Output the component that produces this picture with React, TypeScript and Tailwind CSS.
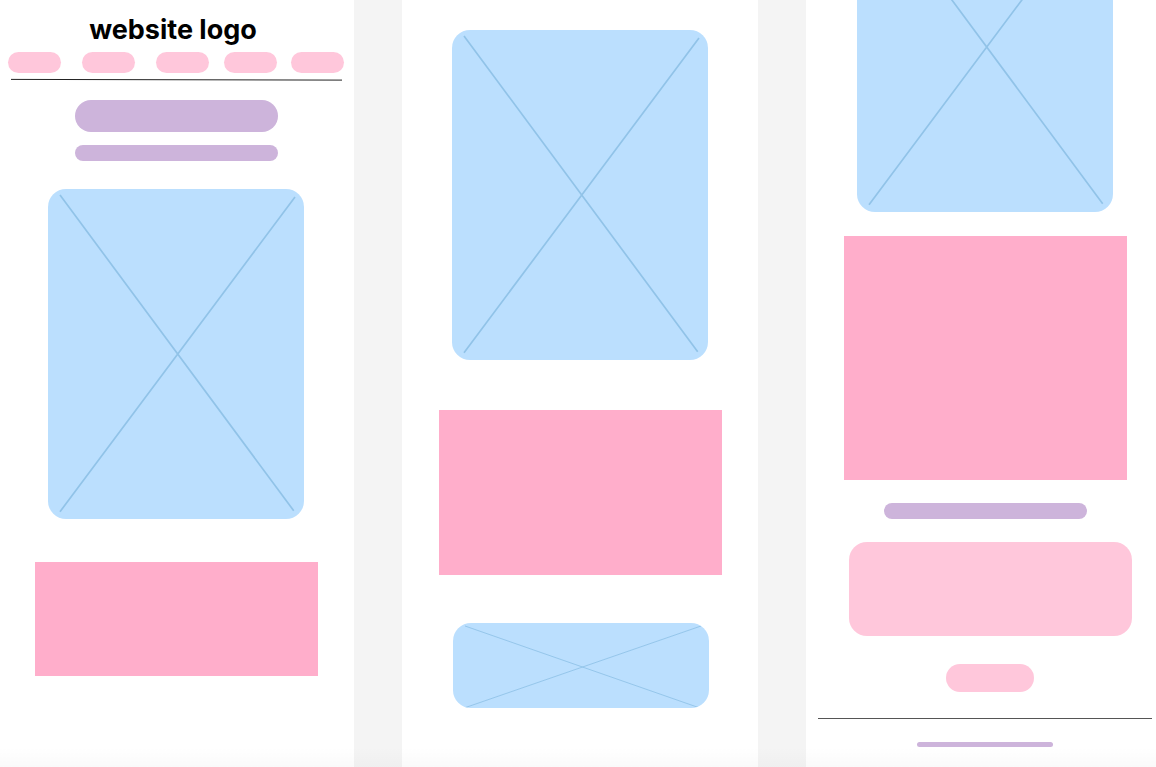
import type { ReactNode } from "react";

const navGroups = [
  ["Home", "Shop", "About"],
  ["Blog", "Contact"],
];

function Panel({ className, children }: { className: string; children: ReactNode }) {
  return (
    <section className={`flex min-w-0 flex-col items-center overflow-hidden bg-white ${className}`}>
      {children}
    </section>
  );
}

function TallImage() {
  return (
    <div className="h-[330px] w-64 shrink-0 rounded-[18px] bg-[#bbdffe]">
      <svg viewBox="0 0 256 330" className="block size-full" stroke="#91c3e8" strokeWidth="1.7" aria-hidden="true">
        <path d="M12 6 245.7 321.7M247 8 12 322.7" />
      </svg>
    </div>
  );
}

function WideImage() {
  return (
    <div className="h-[85px] w-64 shrink-0 overflow-hidden rounded-[18px] bg-[#bbdffe]">
      <svg viewBox="0 0 256 85" className="block size-full" stroke="#91c3e8" strokeWidth="0.9" aria-hidden="true">
        <path d="M12 3 246 84.7M248 3 12 84.7" />
      </svg>
    </div>
  );
}

function Header() {
  return (
    <header className="w-full pr-2.5 pl-2">
      <h1 className="pt-3 pr-1.5 text-center text-[27px] leading-9 font-bold text-black">website logo</h1>
      <nav className="mt-1 flex justify-between">
        {navGroups.map((group, i) => (
          <div key={i} className={i === 0 ? "flex gap-[21px]" : "flex gap-3.5"}>
            {group.map((name) => (
              <a key={name} href="#" aria-label={name} className="h-[21px] w-[53px] rounded-full bg-[#ffc7db]" />
            ))}
          </div>
        ))}
      </nav>
      <svg viewBox="0 0 336 4" className="mt-1 block h-1 w-full" aria-hidden="true">
        <path d="M3 2.4 334 3.1" stroke="#222" strokeWidth="1" />
      </svg>
    </header>
  );
}

export default function App() {
  return (
    <main className="relative grid min-h-screen grid-cols-[354fr_356fr_350fr] gap-12 bg-[#f4f4f4] font-['Inter',sans-serif]">
      <Panel className="pb-10">
        <Header />
        <div className="flex w-full flex-col items-center pt-[19px] pr-0.5">
          <div className="h-8 w-[203px] rounded-full bg-[#cdb4db]" />
          <div className="mt-[13px] h-4 w-[203px] rounded-full bg-[#cdb4db]" />
          <div className="mt-7 flex">
            <TallImage />
          </div>
          <div className="mt-[43px] h-[114px] w-[283px] bg-[#ffaecb]" />
        </div>
      </Panel>

      <Panel className="pt-[30px] pb-10">
        <TallImage />
        <div className="mt-[50px] h-[165px] w-[283px] bg-[#ffaecb]" />
        <div className="mt-12 flex pl-0.5">
          <WideImage />
        </div>
      </Panel>

      <Panel className="pl-2">
        <div className="flex h-[212px] items-end overflow-hidden">
          <TallImage />
        </div>
        <div className="mt-6 h-[244px] w-[283px] bg-[#ffaecb]" />
        <div className="mt-[23px] h-4 w-[203px] rounded-full bg-[#cdb4db]" />
        <div className="mt-[23px] flex flex-col items-center pl-2.5">
          <div className="h-[94px] w-[283px] rounded-[18px] bg-[#ffc7db]" />
          <button type="button" aria-label="Submit" className="mt-7 h-7 w-[88px] rounded-full bg-[#ffc7db]" />
        </div>
        <footer className="mt-[26px] flex w-full flex-col items-center pr-1 pl-1">
          <div className="h-px w-full bg-[#555]" />
          <div className="mt-[23px] h-[5px] w-[136px] rounded-full bg-[#cdb4db]" />
        </footer>
      </Panel>

      <div className="pointer-events-none absolute inset-x-0 bottom-0 h-5 bg-linear-to-t from-black/2 to-transparent" />
    </main>
  );
}
